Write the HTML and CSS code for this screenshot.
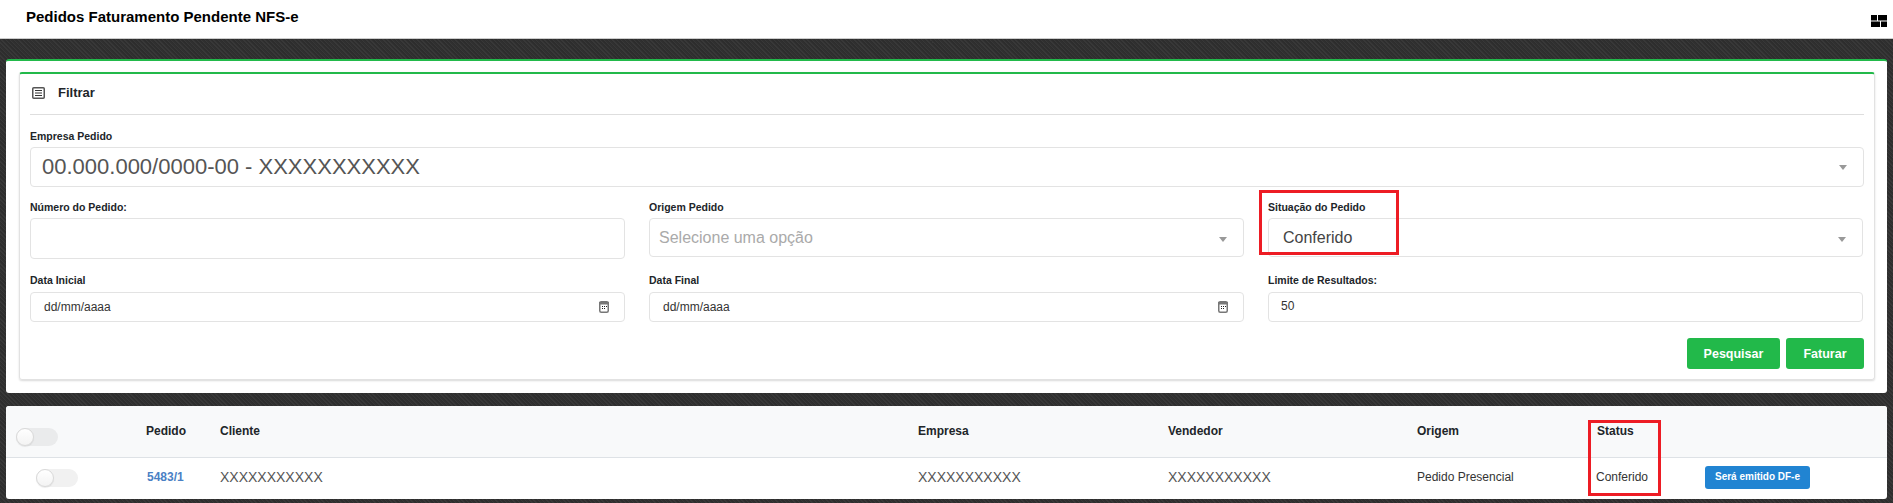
FILE: index.html
```html
<!DOCTYPE html>
<html lang="pt-BR">
<head>
<meta charset="utf-8">
<title>Pedidos Faturamento Pendente NFS-e</title>
<link rel="stylesheet" href="styles.css">
</head>
<body>
<header class="topbar">
  <h1 class="topbar-title">Pedidos Faturamento Pendente NFS-e</h1>
  <svg class="grid-icon" width="16" height="12" viewBox="0 0 16 12"><path fill="#000" d="M0 0h6v5.500H0zM7 0h9v5.500H7zM0 6.500h9V12H0zM10 6.500h6V12h-6z"/></svg>
</header>
<main class="content">
  <section class="panel">
    <div class="card">
      <div class="card-head">
        <svg class="list-icon" width="13" height="12" viewBox="0 0 13 12"><rect x=".75" y=".75" width="11.500" height="10.500" rx="1" fill="#fff" stroke="#555" stroke-width="1.500"/><path stroke="#333" d="M3 3.500h7M3 6h7M3 8.500h7"/></svg>
        <span class="card-title">Filtrar</span>
      </div>
      <div class="field field-first">
        <label class="label">Empresa Pedido</label>
        <div class="box box-large"><span class="big-value">00.000.000/0000-00 - XXXXXXXXXXX</span><i class="arrow"></i></div>
      </div>
      <div class="row row-mid">
        <div class="field">
          <label class="label">Número do Pedido:</label>
          <div class="box box-input"></div>
        </div>
        <div class="field">
          <label class="label">Origem Pedido</label>
          <div class="box box-select"><span class="placeholder">Selecione uma opção</span><i class="arrow"></i></div>
        </div>
        <div class="field field-marked">
          <label class="label">Situação do Pedido</label>
          <div class="box box-select"><span class="select-value">Conferido</span><i class="arrow"></i></div>
          <span class="mark mark-situacao"></span>
        </div>
      </div>
      <div class="row row-dates">
        <div class="field">
          <label class="label">Data Inicial</label>
          <div class="box box-small"><span class="small-value">dd/mm/aaaa</span>
            <svg class="cal-icon" width="10" height="12" viewBox="0 0 10 12"><rect x=".75" y=".75" width="8.500" height="10.500" rx="1.500" fill="#fff" stroke="#777" stroke-width="1.500"/><rect x="0" y="1" width="10" height="2.500" fill="#777"/><path fill="#222" d="M3 5h1v1H3zM5 5h1v1H5zM7 5h1v1H7zM3 7h1v1H3zM5 7h1v1H5z"/></svg>
          </div>
        </div>
        <div class="field">
          <label class="label">Data Final</label>
          <div class="box box-small"><span class="small-value">dd/mm/aaaa</span>
            <svg class="cal-icon" width="10" height="12" viewBox="0 0 10 12"><rect x=".75" y=".75" width="8.500" height="10.500" rx="1.500" fill="#fff" stroke="#777" stroke-width="1.500"/><rect x="0" y="1" width="10" height="2.500" fill="#777"/><path fill="#222" d="M3 5h1v1H3zM5 5h1v1H5zM7 5h1v1H7zM3 7h1v1H3zM5 7h1v1H5z"/></svg>
          </div>
        </div>
        <div class="field">
          <label class="label">Limite de Resultados:</label>
          <div class="box box-small box-limit"><span class="small-value limit-value">50</span></div>
        </div>
      </div>
      <div class="actions">
        <button class="btn btn-search">Pesquisar</button>
        <button class="btn btn-bill">Faturar</button>
      </div>
    </div>
  </section>
  <section class="panel-table">
    <table class="orders">
      <colgroup>
        <col class="c-toggle"><col class="c-pedido"><col class="c-cliente"><col class="c-empresa"><col class="c-vendedor"><col class="c-status"><col class="c-status-wide"><col>
      </colgroup>
      <thead>
        <tr>
          <th class="th-toggle"><span class="switch switch-head"><span class="knob"></span></span></th>
          <th>Pedido</th>
          <th>Cliente</th>
          <th>Empresa</th>
          <th>Vendedor</th>
          <th>Origem</th>
          <th>Status</th>
          <th></th>
        </tr>
      </thead>
      <tbody>
        <tr>
          <td class="td-toggle"><span class="switch"><span class="knob"></span></span></td>
          <td><a class="order-link" href="#">5483/1</a></td>
          <td class="masked">XXXXXXXXXXX</td>
          <td class="masked">XXXXXXXXXXX</td>
          <td class="masked">XXXXXXXXXXX</td>
          <td>Pedido Presencial</td>
          <td class="td-status"><span class="status-text">Conferido</span><span class="mark mark-status"></span></td>
          <td><span class="badge">Será emitido DF-e</span></td>
        </tr>
      </tbody>
    </table>
  </section>
</main>
</body>
</html>
```

FILE: styles.css
```css
* { box-sizing: border-box; }
html, body { margin: 0; height: 503px; overflow: hidden; }
body {
  font-family: "Liberation Sans", Arial, sans-serif;
  color: #212529;
  background-color: #323232;
  background-image: repeating-linear-gradient(45deg, #2d2d2d 0 1px, #383838 1px 2px, #303030 2px 3px);
}
.topbar {
  height: 39px;
  background: #fff;
  border-bottom: 1px solid #ccc;
  display: flex;
  align-items: center;
  justify-content: space-between;
  padding: 0 6px 5px 26px;
}
.topbar-title { margin: 0; font-size: 15px; font-weight: 700; color: #000; }
.grid-icon { display: block; margin-top: 9px; }
.content { padding: 20px 6px 0; }
.panel {
  height: 334px;
  background: #fff;
  border-top: 2px solid #22b94a;
  border-radius: 3px;
  padding: 11px 12px 13px 13px;
}
.card {
  height: 308px;
  border: 1px solid #e2e2e2;
  border-top: 2px solid #22b94a;
  border-radius: 3px;
  box-shadow: 0 1px 2px rgba(0,0,0,.15);
  padding: 0 10px;
}
.card-head {
  height: 41px;
  border-bottom: 1px solid #dedede;
  display: flex;
  align-items: center;
  gap: 13px;
  padding: 0 0 3px 2px;
}
.list-icon { display: block; }
.card-title { font-size: 13px; font-weight: 700; color: #212529; }
.field { position: relative; min-width: 0; }
.field-first { padding-top: 14px; }
.label { display: block; height: 14px; line-height: 14px; font-size: 10.500px; font-weight: 700; color: #212529; margin-bottom: 4px; }
.box {
  background: #fff;
  border: 1px solid #e3e3e3;
  border-radius: 4px;
  display: flex;
  align-items: center;
  justify-content: space-between;
}
.box-large { height: 40px; padding: 0 16px 0 11px; }
.box-input { height: 41px; }
.box-select { height: 39px; padding: 0 16px 0 14px; }
.box-small { height: 30px; padding: 0 15px 0 13px; }
.big-value { font-size: 22px; color: #555; }
.placeholder { font-size: 16px; color: #aaa; margin-left: -5px; }
.select-value { font-size: 16px; color: #444; }
.small-value { font-size: 12px; color: #333; }
.limit-value { margin-top: -2px; margin-left: -1px; }
.arrow { display: block; width: 0; height: 0; border-style: solid; border-width: 5px 4.500px 0; border-color: #999 transparent transparent; }
.box-select .arrow { margin-top: 3px; }
.row { display: grid; grid-template-columns: repeat(3, 595px); gap: 24px; }
.row-mid { margin-top: 13px; }
.row-dates { margin-top: 14px; }
.row-dates .label { margin-bottom: 5px; }
.cal-icon { display: block; }
.actions { display: flex; justify-content: flex-end; gap: 6px; margin-top: 16px; }
.btn {
  height: 31px;
  border: 0;
  border-radius: 3px;
  background: #22b94a;
  color: #fff;
  font-family: inherit;
  font-size: 12.500px;
  font-weight: 700;
  padding: 0;
}
.btn-search { width: 93px; }
.btn-bill { width: 78px; }
.mark { position: absolute; border: 3px solid #ed1c24; pointer-events: none; }
.mark-situacao { left: -9px; top: -10px; width: 140px; height: 65px; }
.panel-table {
  margin-top: 13px;
  height: 93px;
  background: #fff;
  border-radius: 3px;
  overflow: hidden;
}
.orders { width: 100%; border-collapse: collapse; table-layout: fixed; font-size: 12px; }
.c-toggle { width: 130px; }
.c-pedido { width: 74px; }
.c-cliente { width: 698px; }
.c-empresa { width: 250px; }
.c-vendedor { width: 249px; }
.c-status { width: 180px; }
.c-status-wide { width: 108px; }
.orders th {
  height: 51px;
  background: #f8f9fa;
  border-bottom: 1px solid #dee2e6;
  text-align: left;
  vertical-align: top;
  padding: 18px 0 0 10px;
  font-size: 12px;
  font-weight: 700;
  color: #212529;
}
.orders td { height: 42px; vertical-align: middle; padding: 0 0 2px 10px; color: #333; }
.orders .th-toggle { padding: 22px 0 0 10px; }
.orders .td-toggle { padding: 0 0 0 30px; }
.switch { display: block; position: relative; width: 42px; height: 18px; border-radius: 9px; background: #f1f1f1; }
.switch-head { background: #eaebec; }
.knob { position: absolute; left: 0; top: 0; width: 18px; height: 18px; border-radius: 50%; background: linear-gradient(#fff, #f3f3f3); border: 1px solid #d9d9d9; box-shadow: 0 1px 1px rgba(0,0,0,.08); }
.order-link { color: #4a80c4; font-weight: 700; text-decoration: none; margin-left: 1px; }
.masked { font-size: 14px; }
.orders .masked { color: #555; }
.td-status { position: relative; }
.status-text { margin-left: -1px; }
.mark-status { left: 1px; top: -38px; width: 73px; height: 76px; }
.badge { display: inline-block; width: 105px; height: 23px; line-height: 22px; text-align: center; border-radius: 3px; background: #2184d2; color: #fff; font-size: 10px; font-weight: 700; }
```
